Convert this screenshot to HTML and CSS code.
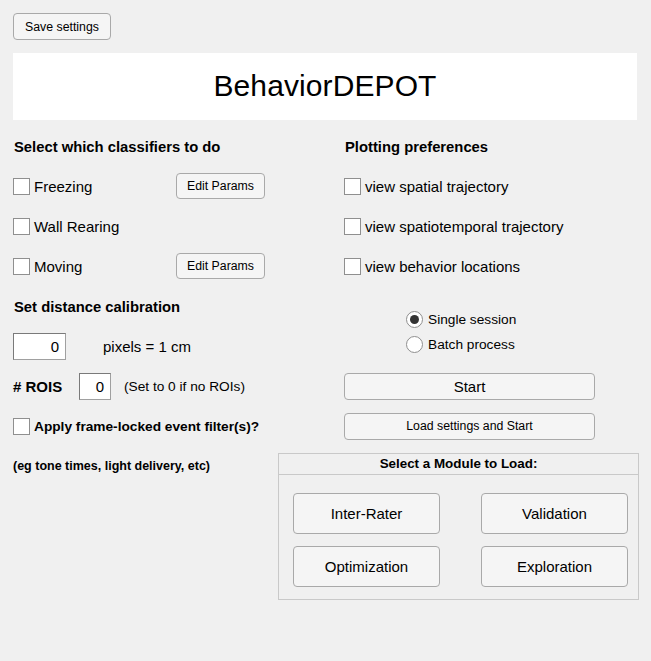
FILE: index.html
```html
<!DOCTYPE html>
<html>
<head>
<meta charset="utf-8">
<title>BehaviorDEPOT</title>
<link rel="stylesheet" href="styles.css">
</head>
<body>
<div class="app">
  <div class="toolbar"><button class="btn btn-save">Save settings</button></div>
  <div class="banner">BehaviorDEPOT</div>

  <div class="main">
    <div class="cell heading l1">Select which classifiers to do</div>
    <div class="cell heading r1">Plotting preferences</div>

    <div class="cell classifier l2"><label class="check"><span class="box"></span>Freezing</label><button class="btn btn-edit">Edit Params</button></div>
    <div class="cell r2"><label class="check"><span class="box"></span>view spatial trajectory</label></div>

    <div class="cell classifier l3"><label class="check"><span class="box"></span>Wall Rearing</label></div>
    <div class="cell r3"><label class="check"><span class="box"></span>view spatiotemporal trajectory</label></div>

    <div class="cell classifier l4"><label class="check"><span class="box"></span>Moving</label><button class="btn btn-edit">Edit Params</button></div>
    <div class="cell r4"><label class="check"><span class="box"></span>view behavior locations</label></div>

    <div class="cell heading l5">Set distance calibration</div>
    <div class="radios r5">
      <label class="radio"><span class="circle on"></span>Single session</label>
      <label class="radio"><span class="circle"></span>Batch process</label>
    </div>

    <div class="cell calib l6"><span class="field field-px">0</span><span class="txt">pixels = 1 cm</span></div>

    <div class="cell rois l7"><span class="bold">#&nbsp;ROIS</span><span class="field field-roi">0</span><span class="txt txt-small">(Set to 0 if no ROIs)</span></div>
    <div class="cell r7"><button class="btn btn-wide btn-start">Start</button></div>

    <div class="cell l8"><label class="check check-filter"><span class="box"></span>Apply frame-locked event filter(s)?</label></div>
    <div class="cell r8"><button class="btn btn-wide btn-load">Load settings and Start</button></div>
  </div>

  <div class="bottom">
    <div class="note">(eg tone times, light delivery, etc)</div>
    <div class="panel">
      <div class="panel-title">Select a Module to Load:</div>
      <div class="panel-body">
        <button class="btn btn-mod">Inter-Rater</button>
        <button class="btn btn-mod">Validation</button>
        <button class="btn btn-mod">Optimization</button>
        <button class="btn btn-mod">Exploration</button>
      </div>
    </div>
  </div>
</div>
</body>
</html>
```

FILE: styles.css
```css
* { box-sizing: border-box; }
html, body { margin: 0; padding: 0; }
body {
  background: #f0f0f0;
  font-family: "Liberation Sans", Arial, sans-serif;
  color: #000;
  width: 651px;
  height: 661px;
  overflow: hidden;
}
.app { padding: 13px 14px 0 13px; }

.btn {
  font-family: "Liberation Sans", Arial, sans-serif;
  color: #000;
  background: #f5f5f5;
  border: 1px solid #a9a9a9;
  border-radius: 4px;
  padding: 0;
  margin: 0;
  display: flex;
  align-items: center;
  justify-content: center;
}
.toolbar { height: 40px; }
.btn-save { width: 98px; height: 27px; font-size: 12.3px; }

.banner {
  background: #fff;
  height: 67px;
  display: flex;
  align-items: center;
  justify-content: center;
  font-size: 30px;
  letter-spacing: 0.1px;
  padding-bottom: 1px;
}

.main {
  margin-top: 6px;
  display: grid;
  grid-template-columns: 331px 294px;
  grid-template-rows: repeat(8, 40px);
}
.cell { display: flex; align-items: center; font-size: 15px; }
.l1 { grid-area: 1 / 1; } .r1 { grid-area: 1 / 2; }
.l2 { grid-area: 2 / 1; } .r2 { grid-area: 2 / 2; }
.l3 { grid-area: 3 / 1; } .r3 { grid-area: 3 / 2; }
.l4 { grid-area: 4 / 1; } .r4 { grid-area: 4 / 2; }
.l5 { grid-area: 5 / 1; } .r5 { grid-area: 5 / 2 / span 2 / 3; }
.l6 { grid-area: 6 / 1; }
.l7 { grid-area: 7 / 1; } .r7 { grid-area: 7 / 2; }
.l8 { grid-area: 8 / 1; } .r8 { grid-area: 8 / 2; }

.heading { font-weight: bold; font-size: 14.8px; padding-left: 1px; padding-top: 1px; }
.bold { font-weight: bold; }

.check { display: flex; align-items: center; font-size: 15px; }
.check-filter { font-weight: bold; font-size: 13.7px; }
.box {
  width: 17px; height: 17px;
  background: #fff;
  border: 1px solid #8f8f8f;
  margin-right: 4px;
  flex: none;
}
.classifier { display: grid; grid-template-columns: 163px auto; align-items: center; }
.btn-edit { width: 89px; height: 26px; font-size: 12.3px; }

.radios {
  display: flex; flex-direction: column;
  padding-top: 25px; padding-left: 62px;
  gap: 8px;
}
.radio { display: flex; align-items: center; font-size: 13.7px; height: 17px; }
.circle {
  width: 17px; height: 17px; border-radius: 50%;
  background: #fff; border: 1px solid #8f8f8f;
  margin-right: 5px; flex: none;
  display: flex; align-items: center; justify-content: center;
}
.circle.on::after {
  content: ""; width: 9px; height: 9px; border-radius: 50%; background: #333;
}

.field {
  background: #fff;
  border: 1px solid #a0a0a0;
  border-left-color: #7a7a7a;
  border-top-color: #7a7a7a;
  height: 27px;
  display: flex; align-items: center; justify-content: flex-end;
  font-size: 15px;
}
.field-px { width: 53px; padding-right: 6px; margin-right: 37px; }
.rois .bold { width: 66px; }
.field-roi { width: 32px; padding-right: 6px; margin-right: 13px; }
.txt { font-size: 15px; }
.txt-small { font-size: 13.7px; }

.btn-wide { width: 251px; height: 27px; }
.btn-start { font-size: 15px; }
.btn-load { font-size: 12.3px; }

.bottom {
  display: grid;
  grid-template-columns: 265px 361px;
}
.note { font-weight: bold; font-size: 12.5px; padding-top: 13px; }
.panel {
  margin-top: 7px;
  border: 1px solid #c9c9c9;
  height: 147px;
}
.panel-title {
  height: 21px;
  border-bottom: 1px solid #c9c9c9;
  text-align: center;
  font-weight: bold;
  font-size: 13.4px;
  line-height: 20px;
}
.panel-body {
  display: grid;
  grid-template-columns: 147px 147px;
  grid-template-rows: 41px 41px;
  column-gap: 41px;
  row-gap: 12px;
  padding: 18px 0 0 14px;
}
.btn-mod { font-size: 15px; }
```
